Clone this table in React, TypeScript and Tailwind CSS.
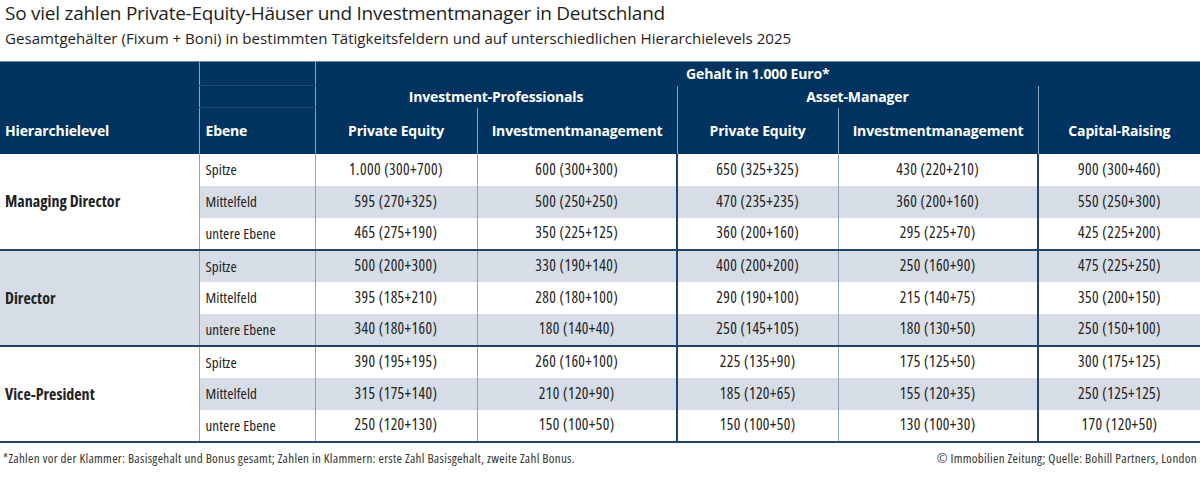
type Row = { ebene: string; values: string[] };
type Group = { level: string; rows: Row[] };

const groups: Group[] = [
  {
    level: "Managing Director",
    rows: [
      { ebene: "Spitze", values: ["1.000 (300+700)", "600 (300+300)", "650 (325+325)", "430 (220+210)", "900 (300+460)"] },
      { ebene: "Mittelfeld", values: ["595 (270+325)", "500 (250+250)", "470 (235+235)", "360 (200+160)", "550 (250+300)"] },
      { ebene: "untere Ebene", values: ["465 (275+190)", "350 (225+125)", "360 (200+160)", "295 (225+70)", "425 (225+200)"] },
    ],
  },
  {
    level: "Director",
    rows: [
      { ebene: "Spitze", values: ["500 (200+300)", "330 (190+140)", "400 (200+200)", "250 (160+90)", "475 (225+250)"] },
      { ebene: "Mittelfeld", values: ["395 (185+210)", "280 (180+100)", "290 (190+100)", "215 (140+75)", "350 (200+150)"] },
      { ebene: "untere Ebene", values: ["340 (180+160)", "180 (140+40)", "250 (145+105)", "180 (130+50)", "250 (150+100)"] },
    ],
  },
  {
    level: "Vice-President",
    rows: [
      { ebene: "Spitze", values: ["390 (195+195)", "260 (160+100)", "225 (135+90)", "175 (125+50)", "300 (175+125)"] },
      { ebene: "Mittelfeld", values: ["315 (175+140)", "210 (120+90)", "185 (120+65)", "155 (120+35)", "250 (125+125)"] },
      { ebene: "untere Ebene", values: ["250 (120+130)", "150 (100+50)", "150 (100+50)", "130 (100+30)", "170 (120+50)"] },
    ],
  },
];

// right border per value column
const valueBorder = [
  "border-r border-r-[#8ea3ba]",
  "border-r-2 border-r-[#1f4470]",
  "border-r border-r-[#8ea3ba]",
  "border-r-2 border-r-[#1f4470]",
  "",
];

export default function App() {
  return (
    <div className="w-[1200px] h-[481px] bg-white text-[#1e1e1e] font-['Open_Sans',sans-serif] overflow-hidden">
      <div className="px-[5px] pt-[1px]">
        <h1 className="text-[19px] leading-[24px] font-normal tracking-[-0.25px] [font-stretch:90%]">
          So viel zahlen Private-Equity-Häuser und Investmentmanager in Deutschland
        </h1>
        <p className="text-[15.1px] leading-[22px] mt-[2px] [font-stretch:100%]">
          Gesamtgehälter (Fixum + Boni) in bestimmten Tätigkeitsfeldern und auf unterschiedlichen Hierarchielevels 2025
        </p>
      </div>

      <table className="mt-[12px] w-full table-fixed border-collapse border-t border-t-[#6f89a6]">
        <colgroup>
          <col className="w-[199px]" />
          <col className="w-[116px]" />
          <col className="w-[162px]" />
          <col className="w-[200px]" />
          <col className="w-[161px]" />
          <col className="w-[200px]" />
          <col className="w-[162px]" />
        </colgroup>
        <thead className="bg-[#003360] text-white text-[14px] font-bold tracking-[-0.15px] [font-stretch:90%]">
          <tr className="h-[24px]">
            <th className="p-0" />
            <th className="p-0 border-l border-r border-l-[#8ea3ba] border-r-[#8ea3ba] border-b border-b-[#1b4878]" />
            <th colSpan={5} className="p-0 font-bold">
              Gehalt in 1.000 Euro*
            </th>
          </tr>
          <tr className="h-[22px]">
            <th className="p-0" />
            <th className="p-0 border-l border-r border-l-[#8ea3ba] border-r-[#8ea3ba] border-b border-b-[#1b4878]" />
            <th colSpan={2} className="p-0 font-bold border-r border-r-[#8ea3ba]">
              Investment-Professionals
            </th>
            <th colSpan={2} className="p-0 font-bold border-r border-r-[#8ea3ba]">
              Asset-Manager
            </th>
            <th className="p-0" />
          </tr>
          <tr className="h-[46px]">
            <th className="p-0 pl-[5px] text-left font-bold">Hierarchielevel</th>
            <th className="p-0 pl-[6px] text-left font-bold border-l border-r border-l-[#8ea3ba] border-r-[#8ea3ba]">
              Ebene
            </th>
            <th className="p-0 font-bold border-r border-r-[#8ea3ba]">Private Equity</th>
            <th className="p-0 font-bold border-r border-r-[#8ea3ba]">Investmentmanagement</th>
            <th className="p-0 font-bold border-r border-r-[#8ea3ba]">Private Equity</th>
            <th className="p-0 font-bold border-r border-r-[#8ea3ba]">Investmentmanagement</th>
            <th className="p-0 font-bold">Capital-Raising</th>
          </tr>
        </thead>
        <tbody className="text-[#222] [font-stretch:75%]">
          {groups.map((g, gi) =>
            g.rows.map((r, ri) => {
              const shaded = (gi * 3 + ri) % 2 === 1;
              const last = ri === 2;
              return (
                <tr
                  key={g.level + r.ebene}
                  className={
                    (shaded ? "bg-[#d6dde6] " : "bg-white ") +
                    "h-[32px] " +
                    (last ? "border-b-2 border-b-[#1f4470]" : "")
                  }
                >
                  {ri === 0 && (
                    <td
                      rowSpan={3}
                      className={
                        "p-0 pl-[5px] font-bold text-[16px] border-b-2 border-b-[#1f4470] " +
                        (gi === 1 ? "bg-[#d6dde6]" : "bg-white")
                      }
                    >
                      {g.level}
                    </td>
                  )}
                  <td className="p-0 pl-[6px] text-[15px] tracking-[0.1px] border-l border-r border-l-[#8ea3ba] border-r-[#8ea3ba]">
                    {r.ebene}
                  </td>
                  {r.values.map((v, vi) => (
                    <td key={vi} className={"p-0 text-center text-[15.5px] tracking-[0.4px] " + valueBorder[vi]}>
                      {v}
                    </td>
                  ))}
                </tr>
              );
            })
          )}
        </tbody>
      </table>

      <div className="flex justify-between px-[3px] pt-[6px] text-[13px] tracking-[0.3px] text-[#333] [font-stretch:75%]">
        <span>*Zahlen vor der Klammer: Basisgehalt und Bonus gesamt; Zahlen in Klammern: erste Zahl Basisgehalt, zweite Zahl Bonus.</span>
        <span>© Immobilien Zeitung; Quelle: Bohill Partners, London</span>
      </div>
    </div>
  );
}
